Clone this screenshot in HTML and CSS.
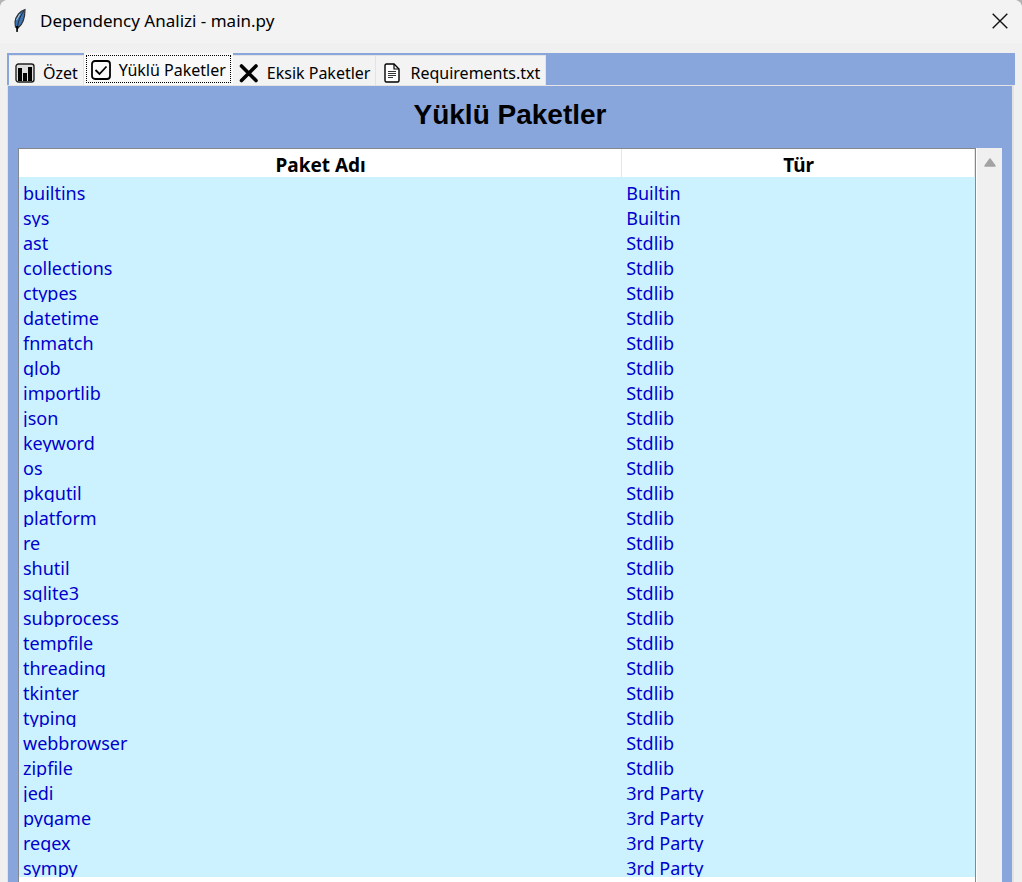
FILE: index.html
```html
<!DOCTYPE html>
<html lang="tr">
<head>
<meta charset="utf-8">
<meta name="viewport" content="width=device-width, initial-scale=1">
<title>Dependency Analizi - main.py</title>
<link rel="stylesheet" href="styles.css">
</head>
<body>
<div class="window">
  <header class="titlebar">
    <svg class="feather" viewBox="0 0 16 26" aria-hidden="true">
      <path d="M13 1.5C8 3 3.500 8 3 14L3.500 19L6 20C10 17 13 10 13 1.500Z" fill="#3c76b5" stroke="#333" stroke-width="1.200"/>
      <path d="M12 3C8 8 5.500 14 5 24" fill="none" stroke="#1b2735" stroke-width="1"/>
      <path d="M4 18L6.500 18L5.500 24L4.500 24Z" fill="#050505"/>
      <path d="M4.500 12L8 6" stroke="#b9cbdc" stroke-width="1"/>
    </svg>
    <h1 class="window-title">Dependency Analizi - main.py</h1>
    <button class="close" type="button" aria-label="Kapat">
      <svg viewBox="0 0 16 16" aria-hidden="true"><path d="M.7.7L15.300 15.300M15.300.7L.7 15.300" stroke="#111" stroke-width="1.400"/></svg>
    </button>
  </header>
  <main class="client">
    <div class="tabs" role="tablist">
      <button class="tab" type="button" role="tab" aria-selected="false">
        <svg class="tab-icon" viewBox="0 0 20 20" aria-hidden="true"><rect x="1" y="1" width="18" height="18" rx="2.500" fill="#ddd" stroke="#222" stroke-width="1.400"/><path d="M3 5H7V18H3ZM8 10H12V18H8ZM13 4H17V18H13Z" fill="#000"/></svg>
        <span>Özet</span>
      </button>
      <button class="tab tab-selected" type="button" role="tab" aria-selected="true">
        <svg class="tab-icon" viewBox="0 0 20 20" aria-hidden="true"><rect x="1" y="1" width="18" height="18" rx="3" fill="none" stroke="#000" stroke-width="1.800"/><path d="M4.500 10L8.500 14L15.500 6.500" fill="none" stroke="#000" stroke-width="1.800"/></svg>
        <span>Yüklü Paketler</span>
      </button>
      <button class="tab" type="button" role="tab" aria-selected="false">
        <svg class="tab-icon" viewBox="0 0 20 20" aria-hidden="true"><path d="M2.500 3L17 17.500M17 3L2.500 17.500" stroke="#000" stroke-width="3.600" stroke-linecap="round"/></svg>
        <span>Eksik Paketler</span>
      </button>
      <button class="tab" type="button" role="tab" aria-selected="false">
        <svg class="tab-icon" viewBox="0 0 20 20" aria-hidden="true"><path d="M4.500 1H12L17 6V17.500Q17 19 15.500 19H4.500Q3 19 3 17.500V2.500Q3 1 4.500 1Z" fill="#fff" stroke="#000" stroke-width="1.400"/><path d="M12 1V6H17" fill="none" stroke="#000" stroke-width="1.200"/><path d="M6 8.500H14M6 10.500H14M6 12.500H14M6 14.500H11" stroke="#333" stroke-width="1"/></svg>
        <span>Requirements.txt</span>
      </button>
    </div>
    <section class="panel" role="tabpanel">
      <h2 class="heading">Yüklü Paketler</h2>
      <div class="tree-area">
        <div class="tree">
          <table class="packages">
            <colgroup><col class="col-name"><col></colgroup>
            <thead><tr><th scope="col">Paket Adı</th><th scope="col">Tür</th></tr></thead>
            <tbody>
              <tr><td><div class="cell">builtins</div></td><td><div class="cell">Builtin</div></td></tr>
              <tr><td><div class="cell">sys</div></td><td><div class="cell">Builtin</div></td></tr>
              <tr><td><div class="cell">ast</div></td><td><div class="cell">Stdlib</div></td></tr>
              <tr><td><div class="cell">collections</div></td><td><div class="cell">Stdlib</div></td></tr>
              <tr><td><div class="cell">ctypes</div></td><td><div class="cell">Stdlib</div></td></tr>
              <tr><td><div class="cell">datetime</div></td><td><div class="cell">Stdlib</div></td></tr>
              <tr><td><div class="cell">fnmatch</div></td><td><div class="cell">Stdlib</div></td></tr>
              <tr><td><div class="cell">glob</div></td><td><div class="cell">Stdlib</div></td></tr>
              <tr><td><div class="cell">importlib</div></td><td><div class="cell">Stdlib</div></td></tr>
              <tr><td><div class="cell">json</div></td><td><div class="cell">Stdlib</div></td></tr>
              <tr><td><div class="cell">keyword</div></td><td><div class="cell">Stdlib</div></td></tr>
              <tr><td><div class="cell">os</div></td><td><div class="cell">Stdlib</div></td></tr>
              <tr><td><div class="cell">pkgutil</div></td><td><div class="cell">Stdlib</div></td></tr>
              <tr><td><div class="cell">platform</div></td><td><div class="cell">Stdlib</div></td></tr>
              <tr><td><div class="cell">re</div></td><td><div class="cell">Stdlib</div></td></tr>
              <tr><td><div class="cell">shutil</div></td><td><div class="cell">Stdlib</div></td></tr>
              <tr><td><div class="cell">sqlite3</div></td><td><div class="cell">Stdlib</div></td></tr>
              <tr><td><div class="cell">subprocess</div></td><td><div class="cell">Stdlib</div></td></tr>
              <tr><td><div class="cell">tempfile</div></td><td><div class="cell">Stdlib</div></td></tr>
              <tr><td><div class="cell">threading</div></td><td><div class="cell">Stdlib</div></td></tr>
              <tr><td><div class="cell">tkinter</div></td><td><div class="cell">Stdlib</div></td></tr>
              <tr><td><div class="cell">typing</div></td><td><div class="cell">Stdlib</div></td></tr>
              <tr><td><div class="cell">webbrowser</div></td><td><div class="cell">Stdlib</div></td></tr>
              <tr><td><div class="cell">zipfile</div></td><td><div class="cell">Stdlib</div></td></tr>
              <tr><td><div class="cell">jedi</div></td><td><div class="cell">3rd Party</div></td></tr>
              <tr><td><div class="cell">pygame</div></td><td><div class="cell">3rd Party</div></td></tr>
              <tr><td><div class="cell">regex</div></td><td><div class="cell">3rd Party</div></td></tr>
              <tr><td><div class="cell">sympy</div></td><td><div class="cell">3rd Party</div></td></tr>
            </tbody>
          </table>
        </div>
        <div class="scrollbar">
          <button class="scroll-up" type="button" aria-label="Yukarı kaydır">
            <svg viewBox="0 0 12 9" aria-hidden="true"><path d="M6 1L11 8H1Z" fill="#a3a3a3" stroke="#a3a3a3" stroke-width="1.500" stroke-linejoin="round"/></svg>
          </button>
        </div>
      </div>
    </section>
  </main>
</div>
</body>
</html>
```

FILE: styles.css
```css
* {
  box-sizing: border-box;
}

body {
  margin: 0;
  background: #b4b4b4;
  font-family: "Noto Sans", "Open Sans", sans-serif;
  font-size: 18px;
  color: #000;
}

button {
  margin: 0;
  padding: 0;
  border: 0;
  background: none;
  font: inherit;
  color: inherit;
}

svg {
  display: block;
}

.window {
  display: flex;
  flex-direction: column;
  min-height: 100vh;
  border-radius: 8px 8px 0 0;
  background: #f0f0f0;
  overflow: hidden;
}

.titlebar {
  display: flex;
  align-items: center;
  height: 43px;
  padding: 0 14px 2px 12px;
  background: #f3f3f3;
}

.feather {
  width: 16px;
  height: 26px;
}

.window-title {
  flex: 1;
  margin: 0 0 0 12px;
  font-size: 17px;
  font-weight: 400;
  line-height: 24px;
}

.close svg {
  width: 16px;
  height: 16px;
}

.client {
  display: flex;
  flex: 1;
  flex-direction: column;
  padding: 10px 7px 0;
}

.tabs {
  display: flex;
  align-items: flex-end;
  height: 32px;
  padding-left: 2px;
  background: #88a5dc;
  font-size: 16px;
}

.tab {
  display: flex;
  align-items: center;
  gap: 8px;
  height: 30px;
  padding: 5px 5px 0 6px;
  border: 1px solid #e3e3e3;
  border-width: 1px 1px 0 0;
  background: #f3f3f3;
  line-height: 24px;
  white-space: nowrap;
}

.tab-selected {
  height: 28px;
  margin: 0 2px 2px;
  padding: 2px 4px 0 4px;
  border: 1px dotted #000;
  outline: 2px solid #f9f9f9;
  background: #f9f9f9;
}

.tab-icon {
  flex: none;
  width: 20px;
  height: 20px;
}

.panel {
  display: flex;
  flex: 1;
  flex-direction: column;
  margin-right: 1px;
  padding: 13px 10px 0;
  border: solid #e3e3e3;
  border-width: 1px 2px 0 1px;
  background: #88a5dc;
}

.heading {
  margin: 0 0 17px;
  font-family: "Liberation Sans", Arial, sans-serif;
  font-size: 28px;
  font-weight: 700;
  line-height: 32px;
  text-align: center;
}

.tree-area {
  display: flex;
  flex: 1;
}

.tree {
  flex: 1;
  border: 1px solid #828790;
  border-bottom: 0;
  background: #fff;
}

.packages {
  width: 100%;
  border-collapse: collapse;
  table-layout: fixed;
}

.col-name {
  width: 63.1%;
}

.packages th {
  height: 28px;
  padding: 4px 0 0;
  background: #fff;
  font-size: 19px;
  font-weight: 700;
  line-height: 24px;
  box-shadow: inset -1px 0 #e5e5e5;
}

.packages td {
  padding: 0 4px;
  background: #ccf2ff;
  color: #0000cd;
}

.cell {
  height: 25px;
  line-height: 32px;
  overflow: hidden;
}

.scrollbar {
  width: 26px;
  border-left: 1px solid #fff;
  background: #f0f0f0;
}

.scroll-up {
  display: flex;
  justify-content: center;
  width: 100%;
  padding-top: 10px;
}

.scroll-up svg {
  width: 12px;
  height: 9px;
}
```
